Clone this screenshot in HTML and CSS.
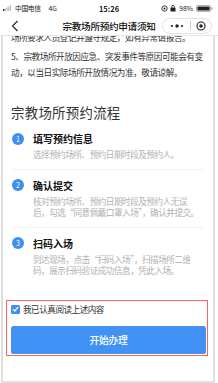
FILE: index.html
```html
<!DOCTYPE html>
<html lang="zh-CN">
<head>
<meta charset="utf-8">
<link rel="stylesheet" href="styles.css">
</head>
<body>
<div class="phone">
  <div class="status">
    <div class="st-left">
      <svg class="signal" width="9" height="6" viewBox="0 0 9 6"><rect x="0" y="4" width="1.4" height="2" fill="#222"/><rect x="2.2" y="3" width="1.4" height="3" fill="#bbb"/><rect x="4.4" y="1.6" width="1.4" height="4.4" fill="#bbb"/><rect x="6.6" y="0" width="1.4" height="6" fill="#bbb"/></svg>
      <span class="carrier">中国电信</span>
      <span class="net">4G</span>
    </div>
    <div class="st-time">15:26</div>
    <div class="st-right">
      <svg width="7" height="7" viewBox="0 0 7 7"><circle cx="3.5" cy="3.5" r="2.7" fill="none" stroke="#222" stroke-width="0.9"/><circle cx="3.5" cy="3.5" r="1" fill="#222"/></svg>
      <svg width="6" height="7" viewBox="0 0 6 7"><rect x="0.5" y="2.5" width="5" height="4" rx="0.6" fill="#222"/><path d="M1.6 2.6V1.8a1.4 1.4 0 0 1 2.8 0v0.8" fill="none" stroke="#222" stroke-width="0.8"/></svg>
      <span class="pct">98%</span>
      <svg width="17" height="7" viewBox="0 0 17 7"><rect x="0.4" y="0.4" width="14.2" height="6.2" rx="1.4" fill="none" stroke="#999" stroke-width="0.8"/><rect x="1.4" y="1.4" width="12.2" height="4.2" rx="0.7" fill="#222"/><rect x="15.2" y="2.3" width="1.2" height="2.4" rx="0.5" fill="#999"/></svg>
    </div>
  </div>
  <div class="nav">
    <svg class="back" width="8" height="12" viewBox="0 0 8 12"><polyline points="6.5,1 1.5,6 6.5,11" fill="none" stroke="#222" stroke-width="1.1"/></svg>
    <div class="title">宗教场所预约申请须知</div>
    <div class="capsule">
      <svg width="14" height="4" viewBox="0 0 14 4"><circle cx="2" cy="2" r="1.1" fill="#222"/><circle cx="7" cy="2" r="1.7" fill="#222"/><circle cx="12" cy="2" r="1.1" fill="#222"/></svg>
      <span class="cap-div"></span>
      <svg width="10" height="10" viewBox="0 0 10 10"><circle cx="5" cy="5" r="4" fill="none" stroke="#222" stroke-width="1.1"/><circle cx="5" cy="5" r="1.8" fill="#222"/></svg>
    </div>
  </div>
  <div class="frame">
    <div class="scroll">
      <div class="content">
        <p class="para para-cut">场所要求人员登记并遵守规定，如有异常请报告。</p>
        <p class="para">5、宗教场所开放因应急、突发事件等原因可能会有变动，以当日实际场所开放情况为准，敬请谅解。</p>
        <h2 class="heading">宗教场所预约流程</h2>
        <ol class="steps">
          <li class="step">
            <div class="step-head"><span class="num">1</span><span class="step-title">填写预约信息</span></div>
            <p class="step-desc">选择预约场所、预约日期时段及预约人。</p>
          </li>
          <li class="step">
            <div class="step-head"><span class="num">2</span><span class="step-title">确认提交</span></div>
            <p class="step-desc">核对预约场所、预约日期时段及预约人无误后，勾选“同意佩戴口罩入场”，确认并提交。</p>
          </li>
          <li class="step">
            <div class="step-head"><span class="num">3</span><span class="step-title">扫码入场</span></div>
            <p class="step-desc">到达现场，点击“扫码入场”，扫描场所二维码，展示扫码验证成功信息，凭此入场。</p>
          </li>
        </ol>
      </div>
    </div>
    <div class="footer">
      <label class="agree"><span class="check"><svg width="7" height="6" viewBox="0 0 7 6"><polyline points="1,3.2 2.8,5 6,1.2" fill="none" stroke="#fff" stroke-width="1.2"/></svg></span><span class="agree-text">我已认真阅读上述内容</span></label>
      <button class="start">开始办理</button>
    </div>
    <div class="annot"></div>
  </div>
</div>
</body>
</html>
```
FILE: styles.css
```css
* { box-sizing: border-box; }
html, body { margin: 0; padding: 0; }
body {
  width: 218px;
  height: 383px;
  overflow: hidden;
  background: #fff;
  font-family: "Noto Sans CJK SC", "Liberation Sans", sans-serif;
  color: #333;
}
.phone { display: flex; flex-direction: column; height: 383px; }
.status {
  height: 16px;
  display: flex;
  align-items: center;
  justify-content: space-between;
  padding: 0 5px 0 3px;
  font-size: 6.8px;
  color: #222;
  position: relative;
}
.st-left { display: flex; align-items: center; gap: 3px; }
.carrier { letter-spacing: -0.4px; }
.net { margin-left: 5px; }
.st-time {
  position: absolute;
  left: 0; right: 0; text-align: center;
  font-size: 7.5px; font-weight: 600;
}
.st-right { display: flex; align-items: center; gap: 2px; }
.pct { margin: 0 1px; }
.nav {
  height: 20px;
  display: flex;
  align-items: center;
  padding: 0 6px 0 11px;
  border-bottom: 1px solid #e6e6e6;
  position: relative;
}
.back { display: block; }
.title {
  position: absolute; left: 0; right: 0; text-align: center;
  font-size: 9.6px; letter-spacing: -0.3px; font-weight: 500; color: #111;
  pointer-events: none;
}
.capsule {
  margin-left: auto;
  width: 50px; height: 16px;
  border: 0.5px solid #e2e2e2;
  border-radius: 8px;
  display: flex; align-items: center; justify-content: space-between;
  padding: 0 5px 0 7px;
  background: rgba(255,255,255,0.9);
}
.cap-div { width: 0.5px; height: 9px; background: #ccc; }
.frame {
  flex: 1;
  display: flex;
  flex-direction: column;
  border: 2px solid #dedede;
  border-top: none;
  margin: 0 3px 0 1px;
  position: relative;
  overflow: hidden;
  min-height: 0;
}
.scroll { flex: 1; overflow: hidden; min-height: 0; }
.content { margin-top: -7px; padding: 0 8px; }
.para {
  margin: 0;
  font-size: 8.6px;
  letter-spacing: -0.45px;
  line-height: 16.5px;
  color: #333;
}
.para-cut { margin-bottom: 2px; }
.heading {
  margin: 22px 0 2.5px;
  font-size: 13.4px;
  letter-spacing: 0.3px;
  line-height: 18px;
  font-weight: 400;
  color: #333;
}
.steps { list-style: none; margin: 0; padding: 0; }
.step {
  padding: 8.5px 0 8px;
  border-bottom: 1px solid #f3f3f3;
}
.step:last-child { border-bottom: none; }
.step-head { display: flex; align-items: center; height: 14px; }
.num {
  width: 12px; height: 12px; border-radius: 50%;
  background: #3f8ff3;
  color: #fff;
  font-size: 7px;
  line-height: 12px;
  text-align: center;
  margin: 0 9px 0 1px;
  flex: none;
}
.step-title { font-size: 10px; font-weight: 700; color: #111; }
.step-desc {
  margin: 3.5px 0 0 22px;
  width: 166px;
  font-size: 8.6px;
  letter-spacing: -0.5px;
  line-height: 11.5px;
  color: #b0b0b0;
}
.footer { padding: 4px 7px 27px 8px; display: flex; flex-direction: column; gap: 12px; }
.agree { display: flex; align-items: center; gap: 3px; height: 10px; font-size: 8.6px; line-height: 10px; color: #333; }
.agree-text { letter-spacing: -0.5px; }
.check {
  width: 9px; height: 9px; border-radius: 1.5px;
  background: #3f8ff3;
  display: flex; align-items: center; justify-content: center;
}
.start {
  height: 28px;
  width: 100%;
  border: none;
  border-radius: 2.5px;
  background: #4192f4;
  color: #fff;
  font-family: inherit;
  font-size: 9.8px;
  letter-spacing: -0.3px;
  font-weight: 500;
}
.annot {
  position: absolute;
  left: 3px; bottom: 25px;
  width: 202px; height: 56px;
  border: 1.5px solid #f2665e;
  pointer-events: none;
}
```
